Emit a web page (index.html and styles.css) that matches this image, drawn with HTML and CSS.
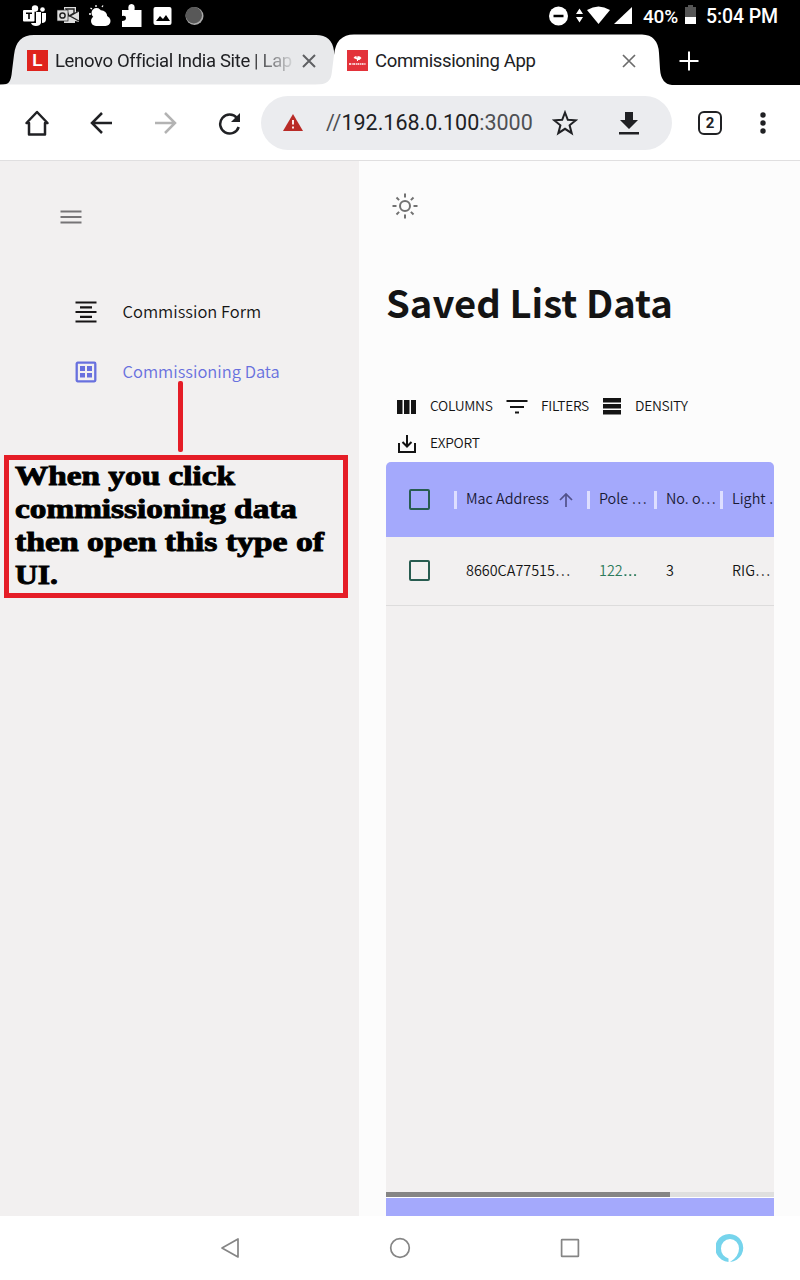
FILE: index.html
```html
<!DOCTYPE html>
<html lang="en">
<head>
<meta charset="utf-8">
<title>Commissioning App</title>
<link rel="stylesheet" href="styles.css">
</head>
<body>
<header class="status">
  <div class="notices">
    <svg width="24" height="24" viewBox="0 0 24 24" fill="#fff"><circle cx="12" cy="4.5" r="3.2"/><circle cx="19.5" cy="5.5" r="2.3"/><path d="M13 8h5v11q-1 3-5 3-4 0-5-3h5z"/><path d="M19 9h4v6q0 4-4 4z"/><rect x="0" y="6" width="11.500" height="11.500" rx="1"/><path d="M3 9.200h6M6 9v6" stroke="#000" stroke-width="1.600"/></svg>
    <svg width="23" height="24" viewBox="0 0 23 24"><path d="M7 3h12v5l3-1v11l-4-1v2H7z" fill="#ddd"/><path d="M9 5h8v4l-5 3zM22 7l-9 5 9 5" stroke="#222" stroke-width="1.400" fill="none"/><rect x="0" y="6" width="11" height="11" fill="#ddd" stroke="#222" stroke-width=".7"/><circle cx="5.500" cy="11.500" r="2.600" fill="none" stroke="#222" stroke-width="1.500"/></svg>
    <svg width="23" height="24" viewBox="0 0 23 24" fill="#fff"><circle cx="7.500" cy="9" r="5"/><circle cx="12" cy="12.500" r="6.200"/><rect x="2" y="12" width="19.500" height="10" rx="5"/><path d="M7 1v2M1.500 4l1.500 1M0 10h2M13 3l1-1.500" stroke="#fff" stroke-width="1.300"/></svg>
    <svg width="22" height="24" viewBox="0 0 22 24" fill="#fff"><path d="M0 6h6.500q-1-6 3-6t3 6h7v17H0v-6q4 0 4-3t-4-2z"/></svg>
    <svg width="21" height="24" viewBox="0 0 21 24"><rect x=".5" y="3" width="18" height="18" rx="2" fill="#fff"/><path d="m3 17 4-5 3 3 3-4 4 6z" fill="#000"/></svg>
    <svg width="21" height="24" viewBox="0 0 21 24"><circle cx="10.500" cy="12" r="9" fill="#aaa"/><circle cx="9.800" cy="11.300" r="8.200" fill="#585858"/></svg>
  </div>
  <div class="system">
    <svg class="signals" width="84" height="24" viewBox="0 0 84 24" fill="#fff"><circle cx="10.500" cy="12" r="9.500"/><path d="M5.500 12h10" stroke="#000" stroke-width="2.500"/><path d="m28 10 3.500-5.500L35 10zM28 13l3.500 5.500L35 13z"/><path d="M39 6q11.500-7 23 0L50.500 20z"/><path d="M66 20h18V3z"/></svg>
    <span class="percent">40%</span>
    <svg class="battery" width="11" height="24" viewBox="0 0 11 24"><path d="M0 3h3V1h5v2h3v11H0z" fill="#555"/><path d="M0 13h11v7H0z" fill="#fff"/></svg>
    <span class="clock">5:04 PM</span>
  </div>
</header>
<nav class="tabs">
  <svg class="tab-shapes" width="800" height="53" viewBox="0 0 800 53"><path d="M0 52c9 0 11-3 12-14l2-16Q16 2 34 2h282q16 0 18 16v35H0z" fill="#e8e9eb"/><path d="M0 51.500h340V53H0z" fill="#fff"/><path d="M312 53v-1c16 0 19-4 20-14l2-16Q336 1.500 354 1.500h288Q658 2 659 20l1 16q1 15 12 16v1z" fill="#fff"/></svg>
  <div class="tab tab-first">
    <span class="lenovo">L</span><span class="tab-name fade">Lenovo Official India Site | Lap</span>
    <svg width="14" height="14" viewBox="0 0 14 14"><path d="m1 1 12 12M13 1 1 13" stroke="#5f6063" stroke-width="2"/></svg>
  </div>
  <div class="tab tab-second">
    <svg width="21" height="21" viewBox="0 0 21 21"><rect width="21" height="21" fill="#e3323a"/><path d="M6.500 8q1-2 3-2v1.500h1V6q3 0 4 2l-2 2h-1.500v1h-1V9.500z" fill="#fff"/><path d="M2 14h17" stroke="#fff" stroke-width="1.700" stroke-dasharray="2 .7 1 .5"/></svg><span class="tab-name">Commissioning App</span>
    <svg width="14" height="14" viewBox="0 0 14 14"><path d="m1 1 12 12M13 1 1 13" stroke="#6c6c6c" stroke-width="1.700"/></svg>
  </div>
  <svg class="plus" width="20" height="20" viewBox="0 0 20 20"><path d="M10 .5v19M.5 10h19" stroke="#fff" stroke-width="2"/></svg>
</nav>
<div class="toolbar">
  <svg class="home" width="26" height="26" viewBox="0 0 26 26" fill="none" stroke="#202124" stroke-width="2.500" stroke-linejoin="round" stroke-linecap="round"><path d="M2.500 13 13 2l10.500 11H21v11.500H5V13z"/></svg>
  <svg class="back" width="24" height="24" viewBox="0 0 24 24" fill="none" stroke="#202124" stroke-width="2.500"><path d="M23 12H3M13 2 3 12l10 10"/></svg>
  <svg class="forward" width="24" height="24" viewBox="0 0 24 24" fill="none" stroke="#b3b3b3" stroke-width="2.500"><path d="M1 12h20M11 2l10 10-10 10"/></svg>
  <svg class="reload" width="24" height="24" viewBox="0 0 24 24"><path d="M20 7A9.500 9.500 0 1 0 21.700 16" fill="none" stroke="#202124" stroke-width="2.500"/><path d="M23 2v9h-9z" fill="#202124"/></svg>
  <div class="address">
    <svg class="warn" width="20" height="18" viewBox="0 0 20 18"><path d="M10 0 20 17H0z" fill="#b92b27"/><path d="M10 6v4.500M10 12.500v2" stroke="#fff" stroke-width="1.800"/></svg>
    <span class="url"><i>//</i>192.168.0.100<i>:3000</i></span>
    <svg class="star" width="26" height="26" viewBox="0 0 26 26"><path d="m13 2.500 2.800 7.300 8 .5-6.200 5 2.100 7.900-6.700-4.400-6.700 4.400 2.100-7.900-6.200-5 8-.5z" fill="none" stroke="#202124" stroke-width="2"/></svg>
    <svg class="download" width="20" height="24" viewBox="0 0 20 24" fill="#202124"><path d="M6 1h8v8h5l-9 9-9-9h5zM0 21h20v2.500H0z"/></svg>
  </div>
  <span class="count">2</span>
  <svg class="dots" width="6" height="24" viewBox="0 0 6 24" fill="#202124"><circle cx="3" cy="4" r="2.700"/><circle cx="3" cy="12" r="2.700"/><circle cx="3" cy="20" r="2.700"/></svg>
</div>
<div class="page">
  <aside class="sidebar">
    <svg class="burger" width="22" height="16" viewBox="0 0 22 16"><path d="M.5 2.500h21M.5 8h21M.5 13.500h21" stroke="#767476" stroke-width="2"/></svg>
    <div class="item">
      <svg width="22" height="22" viewBox="0 0 22 22"><path d="M.5 1.500h21M5 6.300h12M.5 11h21M5 15.800h12M.5 20.500h21" stroke="#171415" stroke-width="2.200"/></svg><span>Commission Form</span>
    </div>
    <div class="item active">
      <svg width="22" height="22" viewBox="0 0 22 22"><rect x="1.700" y="1.700" width="18.600" height="18.600" rx="1" fill="none" stroke="#6870de" stroke-width="2.300"/><path d="M5 5h5v5H5zM12 5h5v5h-5zM5 12h5v4.500H5zM12 12h5v4.500h-5z" fill="#6870de"/></svg><span>Commissioning Data</span>
    </div>
    <div class="pointer"></div>
    <div class="note">
      <svg width="334" height="132" viewBox="0 0 334 132" class="note-text">
        <text x="6" y="24.500" textLength="220" lengthAdjust="spacingAndGlyphs">When you click</text>
        <text x="6" y="57.500" textLength="282" lengthAdjust="spacingAndGlyphs">commissioning data</text>
        <text x="6" y="90.500" textLength="309" lengthAdjust="spacingAndGlyphs">then open this type of</text>
        <text x="6" y="123.500" textLength="43" lengthAdjust="spacingAndGlyphs">UI.</text>
      </svg>
    </div>
  </aside>
  <main class="content">
    <svg class="sun" width="26" height="26" viewBox="0 0 26 26" fill="none" stroke="#717171" stroke-width="2"><circle cx="13" cy="13" r="5"/><path d="M13 .5v4M13 21.500v4M.5 13h4M21.500 13h4M4.500 4.500l2.600 2.600M18.900 18.900l2.600 2.600M4.500 21.500l2.600-2.600M18.900 7.100l2.600-2.600"/></svg>
    <h1>Saved List Data</h1>
    <div class="tools">
      <div class="tool columns"><svg width="20" height="16" viewBox="0 0 20 16"><path d="M0 1h5.500v14H0zM7 1h5.500v14H7zM14 1h5v14h-5z" fill="#141414"/></svg><span>COLUMNS</span></div>
      <div class="tool filters"><svg width="22" height="16" viewBox="0 0 22 16"><path d="M.5 2h21M4 8h14M9 13.500h4" stroke="#141414" stroke-width="2"/></svg><span>FILTERS</span></div>
      <div class="tool density"><svg width="18" height="17" viewBox="0 0 18 17"><path d="M0 0h18v4.500H0zM0 6h18v4.500H0zM0 12h18v4.500H0z" fill="#141414"/></svg><span>DENSITY</span></div>
      <div class="tool export"><svg width="20" height="20" viewBox="0 0 20 20" fill="none" stroke="#141414" stroke-width="2"><path d="M2 9v9h16V9M10 1v11M5.500 8l4.500 4.500L14.500 8"/></svg><span>EXPORT</span></div>
    </div>
    <section class="grid">
      <div class="row head">
        <div class="check"><b></b></div>
        <div class="cell mac"><span>Mac Address</span><svg width="14" height="16" viewBox="0 0 14 16"><path d="M7 15V2M1 8l6-6 6 6" fill="none" stroke="#51518a" stroke-width="1.700"/></svg></div>
        <div class="cell"><span>Pole …</span></div><div class="cell"><span>No. o…</span></div><div class="cell"><span>Light …</span></div>
      </div>
      <div class="row body">
        <div class="check"><b></b></div>
        <div class="cell mac"><span>8660CA77515…</span></div><div class="cell pole"><span>122<em>…</em></span></div><div class="cell"><span>3</span></div><div class="cell"><span>RIG…</span></div>
      </div>
      <div class="space"></div>
      <div class="scroll"><div class="thumb"></div></div>
      <div class="foot"></div>
    </section>
  </main>
</div>
<footer class="navbar">
  <svg width="22" height="22" viewBox="0 0 22 22" fill="none" stroke="#858585" stroke-width="1.700" stroke-linejoin="round"><path d="M19 2v18L3 11z"/></svg>
  <svg width="22" height="22" viewBox="0 0 22 22" fill="none" stroke="#858585" stroke-width="1.700"><circle cx="11" cy="11" r="9.300"/></svg>
  <svg width="22" height="22" viewBox="0 0 22 22" fill="none" stroke="#858585" stroke-width="1.700"><rect x="2.600" y="2.600" width="16.800" height="16.800" rx=".5"/></svg>
  <svg width="28" height="32" viewBox="0 0 28 32"><path fill-rule="evenodd" d="M12.500 30v-3.500Q5 23.500 5 16.500a9 9.500 0 0 1 18 0q0 8-9 13.500a14 14 0 1 0-1.500 0z" fill="#76d4ec"/></svg>
</footer>
</body>
</html>
```
FILE: styles.css
```css
* { box-sizing: border-box; }
body { margin: 0; width: 800px; height: 1280px; overflow: hidden; display: flex; flex-direction: column; background: #fff; font-family: Roboto, sans-serif; }
svg { display: block; flex: none; }
.status { height: 33px; background: #000; display: flex; justify-content: space-between; padding: 4px 23px 0 23px; color: #fff; }
.notices { display: flex; gap: 9.500px; }
.system { display: flex; align-items: flex-start; line-height: 25px; font-weight: 500; }
.percent { margin-left: 11px; width: 35px; font-size: 19px; letter-spacing: -.2px; white-space: nowrap; }
.battery { margin-left: 7px; }
.clock { margin-left: 10px; width: 71px; font-size: 19.500px; letter-spacing: -.1px; white-space: nowrap; }
.tabs { height: 52px; background: #000; position: relative; display: flex; align-items: center; color: #202124; }
.tab-shapes { position: absolute; left: 0; top: 0; }
.tab { position: relative; display: flex; align-items: center; height: 52px; padding-top: 3px; }
.tab-first { width: 320px; padding-left: 27px; }
.tab-second { width: 340px; padding-left: 27px; }
.lenovo { width: 21px; height: 21px; background: #df231d; color: #fff; font: bold 17px/21px "Liberation Sans", sans-serif; text-align: center; }
.tab-name { margin-left: 7px; font-size: 18.500px; width: 247px; white-space: nowrap; letter-spacing: -.35px; }
.fade { width: 240px; margin-right: 7px; -webkit-mask-image: linear-gradient(90deg, #000 195px, transparent 242px); mask-image: linear-gradient(90deg, #000 195px, transparent 242px); }
.plus { position: relative; margin: 3px 0 0 19px; }
.toolbar { height: 76px; border-bottom: 1px solid #e0dfe0; display: flex; align-items: center; padding-left: 24px; background: #fff; }
.back { margin-left: 38.500px; }
.forward { margin-left: 41px; }
.reload { margin-left: 39px; }
.address { width: 411px; height: 54px; border-radius: 27px; background: #ebecef; margin-left: 20.500px; display: flex; align-items: center; padding-left: 22px; }
.url { margin-left: 23px; width: 207px; font-size: 21.500px; color: #202124; white-space: nowrap; }
.url i { font-style: normal; color: #4e5054; }
.star { margin-left: 19px; }
.download { margin-left: 41px; }
.count { width: 24px; height: 24px; border: 2px solid #202124; border-radius: 6px; margin-left: 26px; font-size: 15px; line-height: 20px; font-weight: 700; text-align: center; color: #202124; }
.dots { margin-left: 38px; }
.page { height: 1055px; display: flex; font-family: "Noto Sans CJK SC", sans-serif; color: #141414; }
.sidebar { width: 359px; background: #f2f0f0; }
.burger { margin: 48px 0 0 60px; }
.item { display: flex; align-items: center; height: 24px; margin: 75px 0 0 75px; font-size: 16.500px; font-weight: 350; line-height: 24px; }
.item span { margin: -2px 0 0 25.500px; white-space: nowrap; }
.active { margin-top: 36px; color: #6870de; }
.pointer { width: 5px; height: 71px; border-radius: 2px; background: #e51d27; margin: -3px 0 0 178px; position: relative; }
.note { margin: 3px 0 0 4px; width: 344px; height: 143px; border: 5px solid #e51d27; }
.note-text text { font: bold 26.500px "Liberation Serif", serif; fill: #000; stroke: #000; stroke-width: .9px; }
.content { width: 441px; padding: 32px 26px 0 27px; background: #fcfcfc; display: flex; flex-direction: column; }
.sun { margin-left: 5.500px; }
h1 { margin: 55px 0 0; font-size: 38.200px; line-height: 56px; font-weight: 700; white-space: nowrap; }
.tools { margin-top: 58px; height: 74px; display: grid; grid-template-columns: 120px 96px 100px; grid-template-rows: 37px 37px; font-size: 13.800px; letter-spacing: -.28px; }
.tool { display: flex; align-items: center; }
.columns { padding-left: 11px; }
.tool span { margin: -4px 0 0 13px; white-space: nowrap; font-weight: 350; }
.density { padding-left: 1px; }
.density span { margin-left: 14px; }
.export { padding-left: 11px; }
.grid { width: 388px; height: 754px; border-radius: 5px 5px 0 0; overflow: hidden; background: #f2f0f0; display: flex; flex-direction: column; }
.row { display: grid; grid-template-columns: 68px 133px 67px 66px 54px; align-items: center; font-size: 14.400px; font-weight: 350; }
.head { height: 75px; background: #a4a9fc; color: #1a1a35; }
.body { height: 69px; border-bottom: 1px solid #dddcdc; }
.check { padding-left: 23px; }
.check b { display: block; width: 21px; height: 21px; border: 2.500px solid #285c50; border-radius: 2px; }
.body .check { margin-top: -1px; }
.cell { display: flex; align-items: center; height: 18px; line-height: 24px; padding-left: 10px; border-left: 2px solid transparent; white-space: nowrap; }
.cell span { margin-top: -3px; }
.cell em { font: 14.400px "Open Sans", sans-serif; display: inline-block; transform: scaleX(1.3); transform-origin: left; }
.head .cell { border-left: 3px solid #dedfff; padding-left: 9px; }
.mac svg { margin-left: 10px; }
.body .pole { color: #2c7a5b; }
.space { flex: 1; }
.scroll { height: 6px; background: #dfdfdf; border-bottom: 1px solid #fff; }
.thumb { width: 284px; height: 5px; background: #858585; }
.foot { height: 18px; background: #a4a9fc; }
.navbar { height: 64px; background: #fff; display: flex; align-items: center; padding-left: 219px; }
.navbar svg + svg { margin-left: 148px; }
.navbar svg:last-child { margin-left: 135px; }
```
